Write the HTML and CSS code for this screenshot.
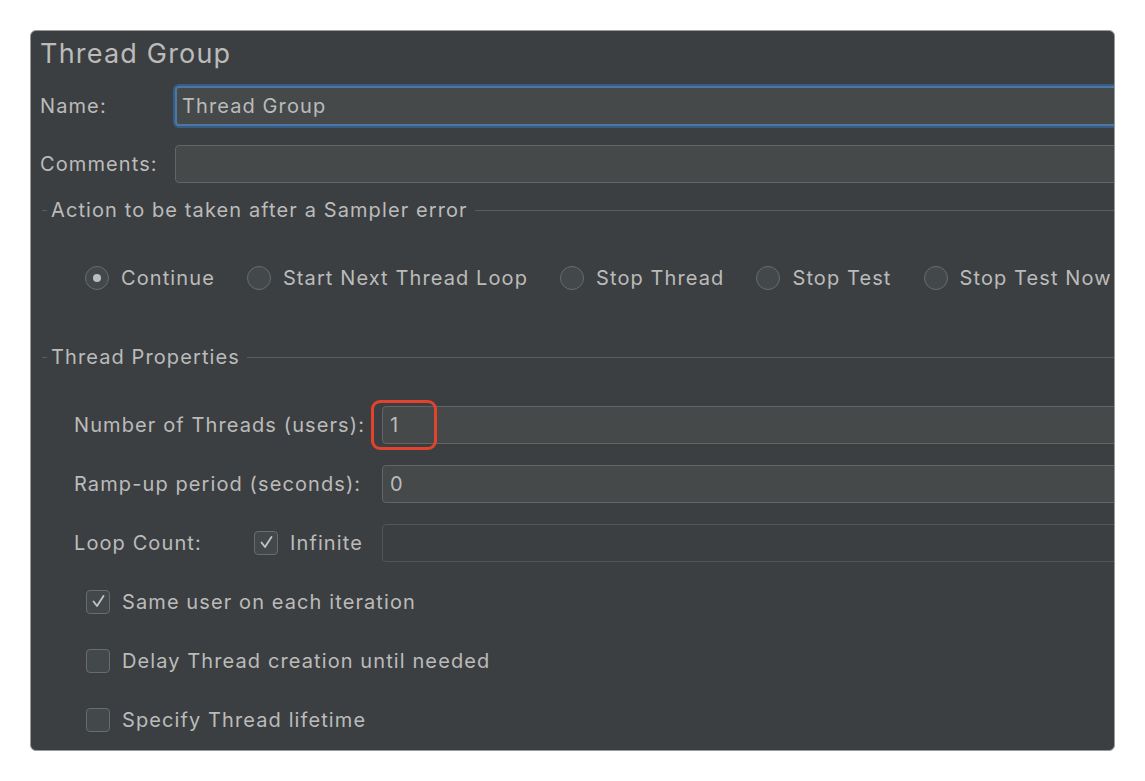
FILE: index.html
```html
<!DOCTYPE html>
<html>
<head>
  <meta charset="UTF-8" />
  <title>Thread Group</title>
  <link rel="stylesheet" href="styles.css">
</head>
<body>
  <div class="panel">
    <div class="title">Thread Group</div>

    <!-- Name / comments -->
    <div class="row row-name">
      <label class="label" for="name">Name:</label>
      <input class="field focused" type="text" id="name" value="Thread Group" />
    </div>
    <div class="row row-comments">
      <label class="label" for="comments">Comments:</label>
      <input class="field" type="text" id="comments" value="" />
    </div>

    <!-- Sampler error -->
    <div class="legend legend-action"><span>Action to be taken after a Sampler error</span></div>
    <div class="radios">
      <div class="radio-item"><span class="radio checked"></span>Continue</div>
      <div class="radio-item"><span class="radio"></span>Start Next Thread Loop</div>
      <div class="radio-item"><span class="radio"></span>Stop Thread</div>
      <div class="radio-item"><span class="radio"></span>Stop Test</div>
      <div class="radio-item"><span class="radio"></span>Stop Test Now</div>
    </div>

    <!-- Thread properties -->
    <div class="legend legend-props"><span>Thread Properties</span></div>
    <div class="props">
      <div class="prow">
        <span class="plabel">Number of Threads (users):</span>
        <div class="pfield">
          <input class="field" type="text" value="1" />
          <span class="highlight"></span>
        </div>
      </div>
      <div class="prow">
        <span class="plabel">Ramp-up period (seconds):</span>
        <div class="pfield">
          <input class="field" type="text" value="0" />
        </div>
      </div>
      <div class="prow">
        <span class="plabel plabel-loop">Loop Count:</span>
        <span class="check-item check-infinite">
          <span class="box">
            <svg width="23" height="23" viewBox="0 0 23 23"><polyline points="6.5,11.5 10,16 16.5,6" fill="none" stroke="#c4c4c4" stroke-width="1.8" stroke-linecap="round" stroke-linejoin="round"/></svg>
          </span>Infinite
        </span>
        <div class="pfield">
          <input class="field disabled" type="text" value="" disabled />
        </div>
      </div>
      <div class="prow prow-check">
        <span class="check-item">
          <span class="box">
            <svg width="23" height="23" viewBox="0 0 23 23"><polyline points="6.5,11.5 10,16 16.5,6" fill="none" stroke="#c4c4c4" stroke-width="1.8" stroke-linecap="round" stroke-linejoin="round"/></svg>
          </span>Same user on each iteration
        </span>
      </div>
      <div class="prow prow-check">
        <span class="check-item"><span class="box"></span>Delay Thread creation until needed</span>
      </div>
      <div class="prow prow-check">
        <span class="check-item"><span class="box"></span>Specify Thread lifetime</span>
      </div>
    </div>
  </div>
</body>
</html>
```

FILE: styles.css
```css
body {
  background-color: white;
  margin: 0;
  font-family: 'Inter', 'Noto Sans', sans-serif;
  color: #bbbbbb;
}
.panel {
  box-sizing: border-box;
  width: 1085px;
  height: 721px;
  margin: 30px 0 0 30px;
  background-color: #3c3f41;
  border: 1px solid #9a9a9a;
  border-radius: 6px;
  overflow: hidden;
  font-size: 20px;
  letter-spacing: 1.1px;
}
.title {
  height: 44px;
  line-height: 46px;
  padding-left: 9px;
  font-size: 27px;
  letter-spacing: 1.2px;
}
.row {
  display: flex;
  align-items: center;
  padding-left: 9px;
}
.row-name {
  height: 62px;
}
.row-comments {
  height: 54px;
}
.label {
  width: 135px;
  flex-shrink: 0;
}
.field {
  box-sizing: border-box;
  flex: 1;
  min-width: 0;
  height: 38px;
  margin-right: -20px;
  padding: 0 7px;
  background-color: #45494a;
  border: 1px solid #646464;
  border-radius: 4px;
  color: #bbbbbb;
  font-family: inherit;
  font-size: 20px;
  letter-spacing: 1.1px;
  outline: none;
}
.field.focused {
  height: 40px;
  border: 2px solid #4b77a6;
  box-shadow: 0 0 0 2px #3a5c80;
  padding-left: 5px;
}
.field.disabled {
  background-color: #3c3f41;
  border-color: #535657;
}
.legend {
  display: flex;
  align-items: center;
}
.legend::before {
  content: '';
  width: 5px;
  margin: 0 4px 0 11px;
  border-top: 1px solid #5b5e60;
}
.legend::after {
  content: '';
  flex: 1;
  margin-left: 7px;
  border-top: 1px solid #5b5e60;
}
.legend-action {
  height: 38px;
}
.legend-props {
  height: 60px;
}
.radios {
  height: 98px;
  display: flex;
  align-items: center;
  gap: 32px;
  padding-left: 54px;
  white-space: nowrap;
}
.radio-item {
  display: flex;
  align-items: center;
  gap: 12px;
}
.radio {
  box-sizing: border-box;
  width: 24px;
  height: 24px;
  border: 1px solid #6b6b6b;
  border-radius: 50%;
  background-color: #43494a;
  display: flex;
  align-items: center;
  justify-content: center;
}
.radio.checked::after {
  content: '';
  width: 8px;
  height: 8px;
  border-radius: 50%;
  background-color: #bdbdbd;
}
.props {
  padding-top: 8px;
}
.prow {
  height: 59px;
  display: flex;
  align-items: center;
  padding-left: 43px;
}
.plabel {
  width: 308px;
  flex-shrink: 0;
  white-space: nowrap;
}
.plabel-loop {
  width: 180px;
}
.pfield {
  position: relative;
  flex: 1;
  display: flex;
}
.check-item {
  display: flex;
  align-items: center;
  gap: 12px;
  white-space: nowrap;
}
.check-infinite {
  width: 128px;
}
.prow-check {
  padding-left: 55px;
}
.box {
  box-sizing: border-box;
  width: 24px;
  height: 24px;
  border: 1px solid #6b6b6b;
  border-radius: 4px;
  background-color: #43494a;
  display: flex;
}
.box svg {
  margin: -0.5px;
}
.highlight {
  position: absolute;
  left: -11px;
  top: -6px;
  width: 66px;
  height: 50px;
  box-sizing: border-box;
  border: 3px solid #e2432d;
  border-radius: 9px;
}
```
